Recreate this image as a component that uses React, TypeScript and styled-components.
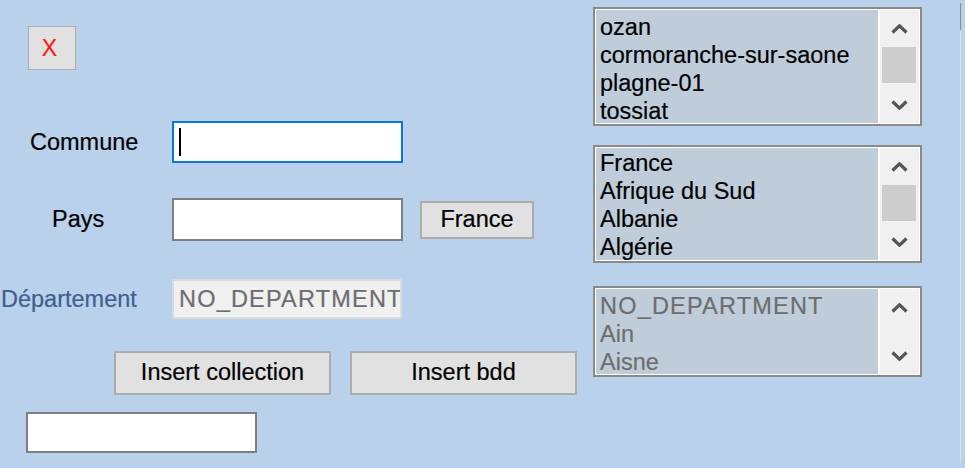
import React from "react";
import styled, { createGlobalStyle } from "styled-components";

const GlobalStyle = createGlobalStyle`
  html, body { margin: 0; padding: 0; }
  body { background: #b9d1ea; }
  * { box-sizing: border-box; }
`;

const FONT = `"Liberation Sans", Arial, sans-serif`;

const Window = styled.div`
  width: 965px;
  height: 468px;
  display: flex;
  align-items: flex-start;
  background: #b9d1ea;
  overflow: hidden;
  font-family: ${FONT};
  font-size: 23.5px;
  color: #000;
  -webkit-text-stroke: 0.2px currentColor;
`;

const LeftPane = styled.div`
  width: 593px;
  flex: none;
  display: flex;
  flex-direction: column;
  align-items: flex-start;
  padding-top: 26px;
`;

const CloseButton = styled.button`
  margin-left: 28px;
  width: 48px;
  height: 44px;
  padding: 0 5px 0 0;
  border: 1px solid #adadad;
  background: #e1e1e1;
  color: #ff1a1a;
  font-family: ${FONT};
  font-size: 23px;
  line-height: 1;
  display: flex;
  align-items: center;
  justify-content: center;
`;

const FieldRow = styled.div<{ $top: number; $height: number }>`
  display: flex;
  align-items: center;
  margin-top: ${(p) => p.$top}px;
  height: ${(p) => p.$height}px;
`;

const FieldLabel = styled.span<{ $indent: number; $muted?: boolean }>`
  width: 172px;
  flex: none;
  padding-left: ${(p) => p.$indent}px;
  color: ${(p) => (p.$muted ? "#40608f" : "#000")};
  white-space: nowrap;
`;

type BoxVariant = "focused" | "normal" | "disabled";

const TextBox = styled.div<{ $variant: BoxVariant; $width: number; $height: number; $left?: number }>`
  width: ${(p) => p.$width}px;
  height: ${(p) => p.$height}px;
  margin-left: ${(p) => p.$left ?? 0}px;
  flex: none;
  display: flex;
  align-items: center;
  padding: 0 5px;
  overflow: hidden;
  white-space: nowrap;
  border: 2px solid
    ${(p) => (p.$variant === "focused" ? "#0a78d7" : p.$variant === "disabled" ? "#dadada" : "#7f7f7f")};
  background: ${(p) => (p.$variant === "disabled" ? "#f0f0f0" : "#fff")};
  color: ${(p) => (p.$variant === "disabled" ? "#6d6d6d" : "#000")};
`;

const Caps = styled.span`
  letter-spacing: 1.2px;
`;

const Caret = styled.span`
  display: block;
  width: 2px;
  height: 28px;
  background: #000;
`;

const PushButton = styled.button<{ $width: number; $height: number; $left?: number }>`
  width: ${(p) => p.$width}px;
  height: ${(p) => p.$height}px;
  margin-left: ${(p) => p.$left ?? 0}px;
  flex: none;
  padding: 0;
  border: 2px solid #adadad;
  background: #e1e1e1;
  color: #000;
  font-family: ${FONT};
  font-size: 23.5px;
  line-height: 1;
  -webkit-text-stroke: 0.2px currentColor;
  display: flex;
  align-items: center;
  justify-content: center;
`;

const ButtonRow = styled.div`
  display: flex;
  gap: 19px;
  margin-top: 32px;
  padding-left: 114px;
`;

const RightPane = styled.div`
  width: 329px;
  flex: none;
  display: flex;
  flex-direction: column;
  padding-top: 7px;
`;

const ListBox = styled.div<{ $height: number; $top?: number }>`
  height: ${(p) => p.$height}px;
  margin-top: ${(p) => p.$top ?? 0}px;
  display: flex;
  border: 2px solid #8a8a8a;
  background: #fff;
  padding: 1px;
`;

const Items = styled.div<{ $disabled?: boolean; $padTop: number }>`
  flex: 1;
  background: #bfcddb;
  padding: ${(p) => p.$padTop}px 0 0 4px;
  line-height: 28px;
  overflow: hidden;
  white-space: nowrap;
  color: ${(p) => (p.$disabled ? "#6d6d6d" : "#000")};
`;

const Item = styled.div``;

const ScrollBar = styled.div`
  width: 39px;
  flex: none;
  margin-left: 2px;
  background: #f0f0f0;
  display: flex;
  flex-direction: column;
`;

const ArrowCell = styled.div`
  height: 37px;
  flex: none;
  display: flex;
  align-items: center;
  justify-content: center;
`;

const Track = styled.div`
  flex: 1;
  display: flex;
  flex-direction: column;
  padding: 0 3px 0 2px;
`;

const Thumb = styled.div`
  height: 36px;
  background: #cdcdcd;
`;

const Edge = styled.div`
  width: 1px;
  height: 468px;
  margin-left: 38px;
  flex: none;
  background: linear-gradient(
    to bottom,
    transparent 0 3px,
    #8c8c8c 3px 30px,
    #dce2ea 30px 463px,
    transparent 463px
  );
`;

const Chevron = ({ up }: { up?: boolean }) => (
  <svg width="17" height="10" viewBox="0 0 17 10">
    <polyline
      points={up ? "1.5,8.5 8.5,1.8 15.5,8.5" : "1.5,1.5 8.5,8.2 15.5,1.5"}
      fill="none"
      stroke="#555"
      strokeWidth="3.2"
    />
  </svg>
);

const Scroll = ({ thumb }: { thumb: boolean }) => (
  <ScrollBar>
    <ArrowCell>
      <Chevron up />
    </ArrowCell>
    <Track>{thumb && <Thumb />}</Track>
    <ArrowCell>
      <Chevron />
    </ArrowCell>
  </ScrollBar>
);

const communes = ["ozan", "cormoranche-sur-saone", "plagne-01", "tossiat"];
const pays = ["France", "Afrique du Sud", "Albanie", "Algérie"];

export default function App() {
  return (
    <>
      <GlobalStyle />
      <Window>
        <LeftPane>
          <CloseButton>X</CloseButton>

          <FieldRow $top={51} $height={42}>
            <FieldLabel $indent={30}>Commune</FieldLabel>
            <TextBox $variant="focused" $width={231} $height={42}>
              <Caret />
            </TextBox>
          </FieldRow>

          <FieldRow $top={35} $height={43}>
            <FieldLabel $indent={52}>Pays</FieldLabel>
            <TextBox $variant="normal" $width={231} $height={43} />
            <PushButton $width={114} $height={38} $left={17}>
              France
            </PushButton>
          </FieldRow>

          <FieldRow $top={38} $height={40}>
            <FieldLabel $indent={1} $muted>
              Département
            </FieldLabel>
            <TextBox $variant="disabled" $width={230} $height={40}>
              <Caps>NO_DEPARTMENT</Caps>
            </TextBox>
          </FieldRow>

          <ButtonRow>
            <PushButton $width={217} $height={44}>
              Insert collection
            </PushButton>
            <PushButton $width={227} $height={44}>
              Insert bdd
            </PushButton>
          </ButtonRow>

          <FieldRow $top={17} $height={41}>
            <TextBox $variant="normal" $width={231} $height={41} $left={26} />
          </FieldRow>
        </LeftPane>

        <RightPane>
          <ListBox $height={119}>
            <Items $padTop={3}>
              {communes.map((c) => (
                <Item key={c}>{c}</Item>
              ))}
            </Items>
            <Scroll thumb />
          </ListBox>

          <ListBox $height={118} $top={19}>
            <Items $padTop={1}>
              {pays.map((c) => (
                <Item key={c}>{c}</Item>
              ))}
            </Items>
            <Scroll thumb />
          </ListBox>

          <ListBox $height={91} $top={23}>
            <Items $padTop={3} $disabled>
              <Item>
                <Caps>NO_DEPARTMENT</Caps>
              </Item>
              <Item>Ain</Item>
              <Item>Aisne</Item>
            </Items>
            <Scroll thumb={false} />
          </ListBox>
        </RightPane>

        <Edge />
      </Window>
    </>
  );
}
